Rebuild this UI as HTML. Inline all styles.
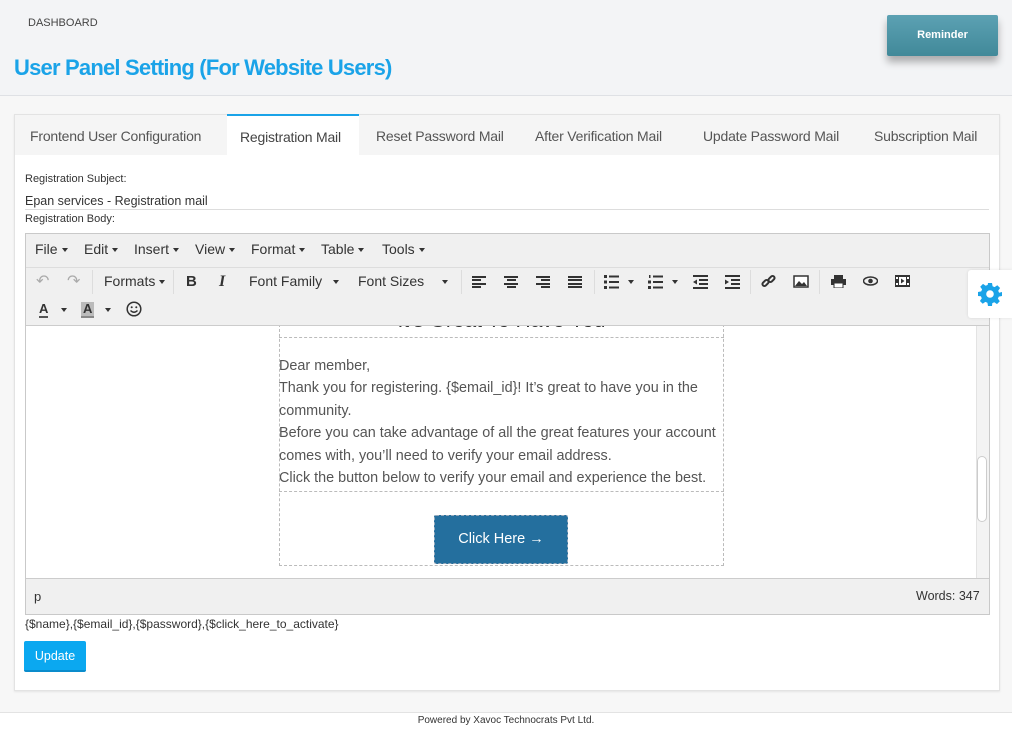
<!DOCTYPE html>
<html><head><meta charset="utf-8"><style>
*{box-sizing:border-box;margin:0;padding:0}
body{width:1012px;height:741px;position:relative;overflow:hidden;background:#f7f7f7;font-family:"Liberation Sans",sans-serif;color:#333}
.a{position:absolute}
.hdr{left:0;top:0;width:1012px;height:96px;background:#f3f4f6;border-bottom:1px solid #dfe1e5}
.tab{top:128px;font-size:14px;color:#555;letter-spacing:-0.2px}
.mi{font-size:14px;color:#333;top:241px}
.car{display:inline-block;border-left:3.5px solid transparent;border-right:3.5px solid transparent;border-top:4px solid #333;vertical-align:middle;margin-left:4px}
.c2{width:0;height:0;border-left:3.5px solid transparent;border-right:3.5px solid transparent;border-top:4px solid #333;top:280px}
.tb{top:273px;font-size:14px;color:#333}
.sep{top:270px;width:1px;height:24px;background:#ddd}
.lines{width:14px;height:12px;top:276px}
.lines i{display:block;height:2px;background:#333;margin-bottom:1.4px}
.bt{font-size:15px;color:#555;line-height:22.4px}
</style></head><body>
<div class="a hdr"></div>
<div class="a" style="left:28px;top:17px;font-size:11px;color:#444">DASHBOARD</div>
<div class="a" style="left:14px;top:55px;font-size:22px;color:#1aa3e8;font-weight:bold;letter-spacing:-0.8px">User Panel Setting (For Website Users)</div>
<div class="a" style="left:887px;top:15px;width:111px;height:41px;background:linear-gradient(#5ca1b3,#418999);color:#fff;font-size:11px;font-weight:bold;text-align:center;line-height:41px;border-radius:2px;box-shadow:0 6px 8px rgba(0,0,0,.3)">Reminder</div>

<div class="a" style="left:14px;top:114px;width:986px;height:577px;background:#fff;border:1px solid #e3e3e3;box-shadow:0 1px 2px rgba(0,0,0,.08)"></div>
<div class="a" style="left:15px;top:115px;width:984px;height:40px;background:#f5f5f5"></div>
<div class="a" style="left:227px;top:114px;width:132px;height:41px;background:#fff;border-top:2px solid #1aa3e8"></div>
<div class="a tab" style="left:30px">Frontend User Configuration</div>
<div class="a tab" style="left:240px;top:129px;color:#444">Registration Mail</div>
<div class="a tab" style="left:376px">Reset Password Mail</div>
<div class="a tab" style="left:535px">After Verification Mail</div>
<div class="a tab" style="left:703px">Update Password Mail</div>
<div class="a tab" style="left:874px">Subscription Mail</div>

<div class="a" style="left:25px;top:173px;font-size:11px;color:#333">Registration Subject:</div>
<div class="a" style="left:25px;top:194px;font-size:12.5px;color:#333">Epan services - Registration mail</div>
<div class="a" style="left:25px;top:209px;width:964px;height:1px;background:#ddd"></div>
<div class="a" style="left:25px;top:213px;font-size:11px;color:#333">Registration Body:</div>

<div class="a" style="left:25px;top:233px;width:965px;height:382px;border:1px solid #c9c9c9;background:#f0f0f0"></div>
<div class="a" style="left:26px;top:267px;width:963px;height:1px;background:#ddd"></div>
<div class="a mi" style="left:35px">File<span class="car"></span></div>
<div class="a mi" style="left:84px">Edit<span class="car"></span></div>
<div class="a mi" style="left:134px">Insert<span class="car"></span></div>
<div class="a mi" style="left:195px">View<span class="car"></span></div>
<div class="a mi" style="left:251px">Format<span class="car"></span></div>
<div class="a mi" style="left:321px">Table<span class="car"></span></div>
<div class="a mi" style="left:382px">Tools<span class="car"></span></div>

<div class="a tb" style="left:36px;color:#aaa;font-size:16px;top:271px">&#8630;</div>
<div class="a tb" style="left:67px;color:#aaa;font-size:16px;top:271px">&#8631;</div>
<div class="a sep" style="left:92px"></div>
<div class="a tb" style="left:104px">Formats<span class="car"></span></div>
<div class="a sep" style="left:173px"></div>
<div class="a tb" style="left:186px;font-weight:bold;font-size:15px">B</div>
<div class="a tb" style="left:219px;font-style:italic;font-weight:bold;font-family:'Liberation Serif',serif;font-size:16px">I</div>
<div class="a tb" style="left:249px">Font Family</div><div class="a c2" style="left:333px"></div>
<div class="a tb" style="left:358px">Font Sizes</div><div class="a c2" style="left:442px"></div>
<div class="a sep" style="left:461px"></div>
<div class="a lines" style="left:472px"><i></i><i style="width:9px"></i><i></i><i style="width:9px"></i></div>
<div class="a lines" style="left:504px"><i></i><i style="width:9px;margin-left:2.5px"></i><i></i><i style="width:9px;margin-left:2.5px"></i></div>
<div class="a lines" style="left:536px"><i></i><i style="width:9px;margin-left:5px"></i><i></i><i style="width:9px;margin-left:5px"></i></div>
<div class="a lines" style="left:568px"><i></i><i></i><i></i><i></i></div>
<div class="a sep" style="left:594px"></div>
<svg class="a" style="left:604px;top:275px" width="15" height="14"><g fill="#333"><rect x="0" y="0" width="3" height="3"/><rect x="0" y="5.5" width="3" height="3"/><rect x="0" y="11" width="3" height="3"/><rect x="5" y="0.5" width="10" height="2"/><rect x="5" y="6" width="10" height="2"/><rect x="5" y="11.5" width="10" height="2"/></g></svg><div class="a c2" style="left:628px"></div>
<svg class="a" style="left:648px;top:275px" width="15" height="14"><g fill="#333"><rect x="1" y="0" width="1.5" height="3"/><rect x="0" y="5.5" width="3" height="3"/><rect x="0" y="11" width="3" height="3"/><rect x="5" y="0.5" width="10" height="2"/><rect x="5" y="6" width="10" height="2"/><rect x="5" y="11.5" width="10" height="2"/></g></svg><div class="a c2" style="left:672px"></div>
<svg class="a" style="left:693px;top:275px" width="15" height="14"><g fill="#333"><rect x="0" y="0" width="15" height="2"/><rect x="6" y="4" width="9" height="2"/><rect x="6" y="8" width="9" height="2"/><rect x="0" y="12" width="15" height="2"/><path d="M0 7 L4 4.5 L4 9.5Z"/></g></svg>
<svg class="a" style="left:725px;top:275px" width="15" height="14"><g fill="#333"><rect x="0" y="0" width="15" height="2"/><rect x="6" y="4" width="9" height="2"/><rect x="6" y="8" width="9" height="2"/><rect x="0" y="12" width="15" height="2"/><path d="M4 7 L0 4.5 L0 9.5Z"/></g></svg>
<div class="a sep" style="left:750px"></div>
<svg class="a" style="left:761px;top:274px" width="15" height="15" viewBox="0 0 15 15"><g fill="none" stroke="#333" stroke-width="2"><rect x="1" y="7" width="7" height="4" rx="2" transform="rotate(-45 4.5 9)"/><rect x="7" y="3" width="7" height="4" rx="2" transform="rotate(-45 10.5 5)"/></g></svg>
<svg class="a" style="left:793px;top:275px" width="16" height="13"><rect x="1" y="1" width="14" height="11" fill="#fff" stroke="#333" stroke-width="1.5"/><path d="M2 11 L6 6 L9 9 L11 7 L14 11Z" fill="#333"/></svg>
<div class="a sep" style="left:819px"></div>
<svg class="a" style="left:831px;top:275px" width="15" height="13"><rect x="3" y="0" width="9" height="4" fill="#333"/><rect x="0" y="4" width="15" height="6" fill="#333"/><rect x="3" y="8" width="9" height="5" fill="#fff" stroke="#333"/></svg>
<svg class="a" style="left:863px;top:276px" width="15" height="10"><ellipse cx="7.5" cy="5" rx="7" ry="4" fill="none" stroke="#333" stroke-width="1.5"/><circle cx="7.5" cy="5" r="2.3" fill="#333"/></svg>
<svg class="a" style="left:895px;top:275px" width="15" height="12"><rect x="0" y="0" width="15" height="12" fill="#333"/><rect x="4" y="2" width="7" height="8" fill="#fff"/><path d="M6 3.5 L9.5 6 L6 8.5Z" fill="#333"/><rect x="1" y="2" width="2" height="2" fill="#fff"/><rect x="1" y="8" width="2" height="2" fill="#fff"/><rect x="12" y="2" width="2" height="2" fill="#fff"/><rect x="12" y="8" width="2" height="2" fill="#fff"/></svg>

<div class="a" style="left:39px;top:302px;font-size:13px;font-weight:bold;color:#333;border-bottom:2px solid #555;line-height:14px">A</div><div class="a c2" style="left:61px;top:308px"></div>
<div class="a" style="left:81px;top:302px;font-size:13px;font-weight:bold;color:#333;background:#bbb;padding:0 2px;border-bottom:2px solid #888;line-height:14px">A</div><div class="a c2" style="left:105px;top:308px"></div>
<svg class="a" style="left:126px;top:301px" width="16" height="16"><circle cx="8" cy="8" r="6.8" fill="none" stroke="#333" stroke-width="1.5"/><circle cx="5.7" cy="6.3" r="1" fill="#333"/><circle cx="10.3" cy="6.3" r="1" fill="#333"/><path d="M4.5 9.5 Q8 13 11.5 9.5" fill="none" stroke="#333" stroke-width="1.4"/></svg>

<div class="a" style="left:26px;top:325px;width:963px;height:253px;background:#fff;border-top:1px solid #ccc;overflow:hidden">
 <div class="a" style="left:253px;top:-12px;width:445px;height:252px;border:1px dashed #bbb"></div>
 <div class="a" style="left:253px;top:11px;width:445px;height:0;border-top:1px dashed #bbb"></div>
 <div class="a" style="left:253px;top:165px;width:445px;height:0;border-top:1px dashed #bbb"></div>
 <div class="a" style="left:253px;top:-17px;width:445px;text-align:center;font-size:21px;color:#333">It's Great To Have You</div>
 <div class="a bt" style="left:253px;top:29px;width:445px;font-size:14.4px">Dear member,<br>Thank you for registering. {$email_id}! It’s great to have you in the community.<br>Before you can take advantage of all the great features your account comes with, you’ll need to verify your email address.<br>Click the button below to verify your email and experience the best.</div>
 <div class="a" style="left:408px;top:189px;width:134px;height:49px;background:#246f9e;border:1px dashed #9ab;color:#fff;font-size:14.5px;text-align:center;line-height:47px;border-radius:2px">Click Here →</div>
 <div class="a" style="left:950px;top:0;width:13px;height:253px;background:#f3f3f3;border-left:1px solid #e3e3e3"></div>
 <div class="a" style="left:951px;top:130px;width:10px;height:66px;background:#fff;border:1px solid #ccc;border-radius:5px"></div>
</div>
<div class="a" style="left:26px;top:578px;width:963px;height:1px;background:#ccc"></div>
<div class="a" style="left:34px;top:589px;font-size:13px;color:#333">p</div>
<div class="a" style="left:916px;top:589px;font-size:12.5px;color:#333">Words: 347</div>

<div class="a" style="left:25px;top:617px;font-size:12px;color:#333">{$name},{$email_id},{$password},{$click_here_to_activate}</div>
<div class="a" style="left:24px;top:641px;width:62px;height:31px;background:#0ba8f0;border-bottom:2px solid #0a8ccc;color:#fff;font-size:12.5px;text-align:center;line-height:30px;border-radius:2px">Update</div>

<div class="a" style="left:968px;top:270px;width:44px;height:48px;background:#fff;border-radius:3px 0 0 3px;box-shadow:0 0 3px rgba(0,0,0,.1)"></div>
<svg class="a" style="left:978px;top:282px" width="24" height="24" viewBox="0 0 24 24"><path fill="#1aa3e8" d="M10 1h4l.6 3.2 2 .9 2.7-1.9 2.8 2.8-1.9 2.7.9 2L24 10v4l-3.2.6-.9 2 1.9 2.7-2.8 2.8-2.7-1.9-2 .9L14 24h-4l-.6-3.2-2-.9-2.7 1.9-2.8-2.8 1.9-2.7-.9-2L0 14v-4l3.2-.6.9-2L2.2 4.7 5 1.9l2.7 1.9 2-.9z"/><circle cx="12" cy="12" r="3.8" fill="#fff"/></svg>

<div class="a" style="left:0;top:712px;width:1012px;height:29px;background:#fff;border-top:1px solid #e3e3e3"></div>
<div class="a" style="left:0;top:715px;width:1012px;text-align:center;font-size:10px;color:#333">Powered by Xavoc Technocrats Pvt Ltd.</div>
</body></html>
